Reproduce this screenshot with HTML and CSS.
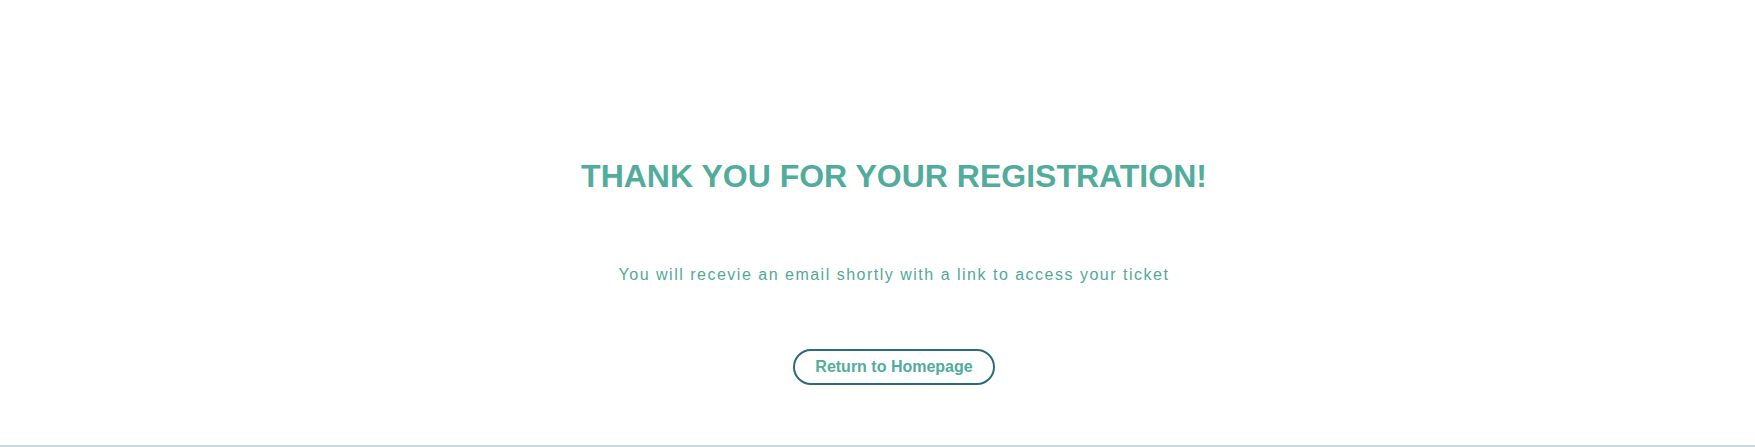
FILE: index.html
```html
<!DOCTYPE html>
<html lang="en">
<head>
<meta charset="utf-8">
<title>Thank you</title>
<link rel="stylesheet" href="styles.css">
</head>
<body>
<main class="page">
  <section class="thanks">
    <h1 class="thanks-title">THANK YOU FOR YOUR REGISTRATION!</h1>
    <p class="thanks-text">You will recevie an email shortly with a link to access your ticket</p>
    <a class="thanks-btn" href="#">Return to Homepage</a>
  </section>
</main>
</body>
</html>
```
FILE: styles.css
```css
html, body {
  margin: 0;
  padding: 0;
  background: #ffffff;
}
body {
  font-family: "Liberation Sans", Arial, sans-serif;
}
.page {
  height: 445px;
  border-bottom: 2px solid #c9d9e3;
  box-sizing: content-box;
}
.thanks {
  display: flex;
  flex-direction: column;
  align-items: center;
  padding: 156px 0 0 33px;
}
.thanks-title {
  margin: 0;
  font-size: 32px;
  line-height: 40px;
  font-weight: 700;
  color: #52ac9b;
}
.thanks-text {
  margin: 69px 0 0;
  font-size: 16px;
  line-height: 20px;
  letter-spacing: 1.5px;
  color: #52a89a;
}
.thanks-btn {
  margin-top: 64px;
  box-sizing: border-box;
  width: 202px;
  height: 36px;
  display: flex;
  align-items: center;
  justify-content: center;
  border: 2px solid #2b6c79;
  border-radius: 18px;
  font-size: 16px;
  font-weight: 700;
  color: #52ac9b;
  text-decoration: none;
}
```
